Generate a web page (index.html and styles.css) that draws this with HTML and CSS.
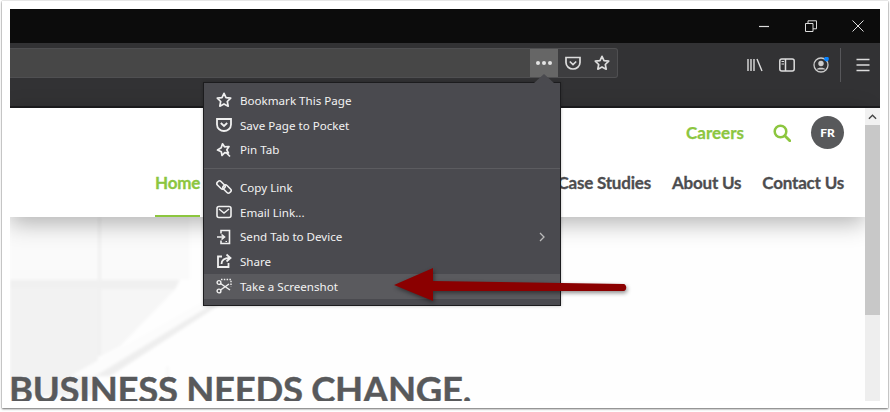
FILE: index.html
```html
<!DOCTYPE html>
<html lang="en">
<head>
<meta charset="utf-8">
<title>Take a Screenshot</title>
<link rel="stylesheet" href="styles.css">
</head>
<body>
<div class="frame">
  <div class="window">
    <div class="titlebar">
      <svg class="ctl" viewBox="0 0 12 12"><path d="M1 6.500h10" stroke="#ddd" stroke-width="1.200"/></svg>
      <svg class="ctl" viewBox="0 0 12 12"><path d="M.5 3.500h7.500v8H.5zM3 3.500V.8h8.500v8H8" fill="none" stroke="#ddd"/></svg>
      <svg class="ctl" viewBox="0 0 12 12"><path d="M.5.500l11 11M11.500.500l-11 11" stroke="#ddd"/></svg>
    </div>
    <div class="toolbar">
      <div class="urlbar">
        <div class="url-fill"></div>
        <div class="dots"><span></span><span></span><span></span></div>
        <svg class="tool" viewBox="0 0 16 16"><path d="M1 2.500h14v5c0 4-3.500 6.500-7 6.500S1 11.500 1 7.500z" fill="none" stroke="#ddd" stroke-width="1.700"/><path d="M4.800 6.500L8 9.500l3.200-3" fill="none" stroke="#ddd" stroke-width="1.700"/></svg>
        <svg class="tool star" viewBox="0 0 16 16"><path d="M8 1.300l2 4.300 4.700.6-3.400 3.300.9 4.700L8 11.900l-4.200 2.300.9-4.700L1.300 6.200 6 5.600z" fill="none" stroke="#ddd" stroke-width="1.700" stroke-linejoin="round"/></svg>
      </div>
      <div class="tools">
        <svg class="tool" viewBox="0 0 16 16"><path d="M1 2v12M4 2v12M7 2v12M10 2l5 12" stroke="#ddd" stroke-width="1.400" fill="none"/></svg>
        <svg class="tool" viewBox="0 0 16 16"><rect x=".8" y="2" width="14.400" height="12" rx="2" fill="none" stroke="#ddd" stroke-width="1.500"/><path d="M6.500 2v12" stroke="#ddd" stroke-width="1.500"/><path d="M2.500 4.500h2.500M2.500 7h2.500" stroke="#ddd"/></svg>
        <svg class="tool account" viewBox="0 0 16 16"><circle cx="8" cy="8" r="7" fill="none" stroke="#ccc" stroke-width="1.300"/><circle cx="8" cy="6.500" r="2.700" fill="#ccc"/><path d="M3.500 12.500c1-2.500 8-2.500 9 0" fill="#ccc"/><circle cx="13.500" cy="2" r="2.400" fill="#0a84ff"/></svg>
        <div class="vsep"></div>
        <svg class="tool burger" viewBox="0 0 14 14"><path d="M.500 1.500h13M.500 7h13M.500 12.500h13" stroke="#ddd" stroke-width="1.600"/></svg>
      </div>
    </div>
    <div class="viewport">
      <div class="page">
        <header class="header">
          <div class="utility">
            <span class="careers">Careers</span>
            <svg class="search" viewBox="0 0 18 18"><circle cx="7.500" cy="7.500" r="5.800" fill="none" stroke="#8cc63f" stroke-width="2.500"/><path d="M11.800 11.800l5 5" stroke="#8cc63f" stroke-width="2.800" stroke-linecap="round"/></svg>
            <span class="avatar">FR</span>
          </div>
          <nav class="nav">
            <span class="nav-item active">Home</span>
            <span class="nav-fill"></span>
            <span class="nav-item">Case Studies</span>
            <span class="nav-item">About Us</span>
            <span class="nav-item">Contact Us</span>
          </nav>
        </header>
        <section class="hero">
          <svg class="hero-art" viewBox="0 0 855 185" preserveAspectRatio="none">
            <rect width="855" height="185" fill="#fefefe"/>
            <rect x="-10" y="-10" width="190" height="73" fill="#fafafa"/>
            <path d="M-10 63H170L165 73H-10z" fill="#f0f0f0"/>
            <rect x="-10" y="73" width="98" height="107" fill="#f2f2f2"/>
            <path d="M91 73H165L110 130 91 140z" fill="#f6f6f6"/>
            <rect x="88" y="-10" width="3" height="150" fill="#f0f0f0"/>
            <path d="M60 160L190 86H205L85 160z" fill="#fcfcfc"/>
            <path d="M85 160L205 86H213L100 160z" fill="#eeeeee"/>
            <rect x="157" y="150" width="1" height="35" fill="#efefef"/>
          </svg>
          <h1 class="headline">BUSINESS NEEDS CHANGE.</h1>
        </section>
      </div>
      <div class="scrollbar">
        <div class="sb-arrow"><svg viewBox="0 0 10 6" width="9" height="6"><path d="M1 5l4-4 4 4" fill="none" stroke="#444" stroke-width="1.500"/></svg></div>
        <div class="sb-thumb"></div>
      </div>
    </div>
  </div>
  <div class="menu">
    <svg class="notch" viewBox="0 0 20 9"><path d="M0 9L10 0l10 9z" fill="#4a4a4f"/></svg>
    <div class="menu-item">
      <svg class="mi" viewBox="0 0 16 16"><path d="M8 1.300l2 4.300 4.700.6-3.400 3.300.9 4.700L8 11.900l-4.200 2.300.9-4.700L1.300 6.200 6 5.600z" fill="none" stroke="#f0f0f0" stroke-width="1.700" stroke-linejoin="round"/></svg>
      <span>Bookmark This Page</span>
    </div>
    <div class="menu-item">
      <svg class="mi" viewBox="0 0 16 16"><path d="M1 2h14v5.500c0 4-3.500 6.500-7 6.500s-7-2.500-7-6.500z" fill="none" stroke="#f0f0f0" stroke-width="1.800"/><path d="M4.800 6L8 9l3.200-3" fill="none" stroke="#f0f0f0" stroke-width="1.800"/></svg>
      <span>Save Page to Pocket</span>
    </div>
    <div class="menu-item">
      <svg class="mi" viewBox="0 0 16 16"><path d="M6.500 1.800l2 3 4.500-.3-2.200 3.300 1.600 3.200-3.700-.3L6 13.500 5.300 9.700 1.500 8l3.700-2.200zM10 10.500l4 4" fill="none" stroke="#f0f0f0" stroke-width="1.700" stroke-linejoin="round"/></svg>
      <span>Pin Tab</span>
    </div>
    <div class="menu-sep"></div>
    <div class="menu-item">
      <svg class="mi" viewBox="0 0 16 16"><rect x=".5" y="3.500" width="9" height="5" rx="2" transform="rotate(45 5 6)" fill="none" stroke="#f0f0f0" stroke-width="1.600"/><rect x="6.500" y="7.500" width="9" height="5" rx="2" transform="rotate(45 11 10)" fill="none" stroke="#f0f0f0" stroke-width="1.600"/></svg>
      <span>Copy Link</span>
    </div>
    <div class="menu-item">
      <svg class="mi" viewBox="0 0 16 16"><rect x="1" y="2.500" width="14" height="11" rx="2" fill="none" stroke="#f0f0f0" stroke-width="1.600"/><path d="M3 5l5 4 5-4" fill="none" stroke="#f0f0f0" stroke-width="1.500"/></svg>
      <span>Email Link...</span>
    </div>
    <div class="menu-item">
      <svg class="mi" viewBox="0 0 16 16"><path d="M5 4.500V1.500h8.500v13H5v-3" fill="none" stroke="#f0f0f0" stroke-width="1.600"/><path d="M1 8h7M5.500 5.500L8.500 8l-3 2.500" fill="none" stroke="#f0f0f0" stroke-width="1.600"/><path d="M9.500 12.500h1.500" stroke="#f0f0f0"/></svg>
      <span>Send Tab to Device</span>
      <svg class="chev" viewBox="0 0 6 10"><path d="M1 1l4 4-4 4" fill="none" stroke="#bbb" stroke-width="1.300"/></svg>
    </div>
    <div class="menu-item">
      <svg class="mi" viewBox="0 0 16 16"><path d="M6 3.500H2v10.500h10.500v-4" fill="none" stroke="#f0f0f0" stroke-width="1.800"/><path d="M5.500 11c0-4 3-6 8-6M10.500 1.500L14.500 5l-4 3.500" fill="none" stroke="#f0f0f0" stroke-width="1.800"/></svg>
      <span>Share</span>
    </div>
    <div class="menu-item hover">
      <svg class="mi" viewBox="0 0 16 16"><path d="M5 1.500h10v7" fill="none" stroke="#f0f0f0" stroke-width="1.400" stroke-dasharray="1.500 1.300"/><circle cx="3" cy="4.500" r="1.900" fill="none" stroke="#f0f0f0" stroke-width="1.400"/><circle cx="3" cy="13" r="1.900" fill="none" stroke="#f0f0f0" stroke-width="1.400"/><path d="M4.500 5.500L14 12M4.500 12L13 6" stroke="#f0f0f0" stroke-width="1.500"/></svg>
      <span>Take a Screenshot</span>
    </div>
  </div>
  <svg class="arrow" viewBox="0 0 240 40">
    <path d="M3 17L42 0L42 13L233 16C236 17 236 22 233 23L42 23L42 33z" fill="#8b0000"/>
  </svg>
</div>
</body>
</html>
```
FILE: styles.css
```css
* { box-sizing: border-box; }
html, body { margin: 0; height: 100%; background: #fff; overflow: hidden; }
body { padding: 1px 2px 4px 2px; font-family: "Lato", "Liberation Sans", sans-serif; }
.frame {
  position: relative;
  height: 407px;
  width: 886px;
  padding: 8px 8px 7px 8px;
  background: #fff;
  box-shadow: 0 1px 2px rgba(0,0,0,.55), 0 0 1px rgba(0,0,0,.35);
}
.window { display: flex; flex-direction: column; height: 100%; overflow: hidden; }
.titlebar {
  height: 34px;
  background: #0c0c0c;
  display: flex;
  align-items: center;
  justify-content: flex-end;
  gap: 35px;
  padding-right: 16px;
}
.ctl { width: 12px; height: 12px; }
.toolbar {
  height: 63px;
  background: #323234;
  display: flex;
  align-items: flex-start;
  padding-top: 5px;
}
.urlbar {
  width: 608px;
  height: 30px;
  display: flex;
  align-items: center;
  background: #3d3d3f;
  border: 1px solid #4f4f51;
  border-left: 0;
  border-radius: 0 3px 3px 0;
}
.url-fill { flex: 1; height: 100%; background: #474747; }
.dots {
  width: 28px;
  height: 100%;
  background: #666;
  display: flex;
  align-items: center;
  justify-content: center;
  gap: 2px;
}
.dots span { width: 4px; height: 4px; border-radius: 50%; background: #e4e4e4; }
.tool { width: 16px; height: 16px; flex: none; }
.urlbar .tool { margin-left: 7px; }
.urlbar .star { margin-left: 13px; margin-right: 7px; }
.tools { flex: 1; display: flex; align-items: center; height: 34px; padding-left: 129px; }
.tools .tool { margin-right: 16px; }
.tools .account { margin-right: 11px; margin-left: 2px; }
.vsep { width: 1px; height: 34px; background: #57575a; }
.tools .burger { width: 14px; height: 14px; margin: 0 0 0 15px; }
.viewport {
  flex: 1;
  min-height: 0;
  display: flex;
  border-top: 2px solid #1d1d1f;
}
.page { flex: 1; min-width: 0; display: flex; flex-direction: column; }
.header {
  height: 109px;
  background: #fff;
  box-shadow: 0 6px 22px rgba(0,0,0,.3);
  position: relative;
  z-index: 1;
  display: flex;
  flex-direction: column;
}
.utility {
  display: flex;
  align-items: center;
  justify-content: flex-end;
  padding: 8px 21px 0 0;
  height: 41px;
}
.careers { font-size: 17px; font-weight: 700; color: #8cc63f; -webkit-text-stroke: .25px #8cc63f; }
.search { width: 18px; height: 18px; margin-left: 29px; }
.avatar {
  width: 33px;
  height: 33px;
  margin-left: 20px;
  border-radius: 50%;
  background: #58595b;
  color: #fff;
  font-size: 12px;
  font-weight: 900;
  display: flex;
  align-items: center;
  justify-content: center;
}
.nav {
  flex: 1;
  display: flex;
  align-items: stretch;
  gap: 21px;
  padding: 0 21px 0 145px;
}
.nav-item {
  font-size: 17px;
  font-weight: 700;
  color: #4d4d4f;
  padding-top: 23px;
  line-height: 22px;
  letter-spacing: -.2px;
  -webkit-text-stroke: .3px #4d4d4f;
}
.nav-item.active { color: #8cc63f; border-bottom: 2px solid #8cc63f; -webkit-text-stroke: .3px #8cc63f; }
.nav-fill { flex: 1; }
.hero {
  position: relative;
  flex: 1;
  min-height: 0;
  overflow: hidden;
  display: flex;
  align-items: flex-end;
}
.hero-art { position: absolute; inset: 0; width: 100%; height: 100%; filter: blur(1.500px); }
.headline {
  position: relative;
  margin: 0 0 -10px -1px;
  font-size: 36.500px;
  line-height: 44px;
  font-weight: 700;
  color: #58595b;
  white-space: nowrap;
  letter-spacing: -.3px;
  -webkit-text-stroke: .4px #58595b;
}
.scrollbar { position: relative; z-index: 2; width: 15px; background: #eee; display: flex; flex-direction: column; }
.sb-arrow { height: 17px; background: #f1f1f1; display: flex; align-items: center; justify-content: center; }
.sb-thumb { height: 190px; background: #c8c8c8; }
.menu {
  position: absolute;
  z-index: 3;
  left: 201px;
  top: 81px;
  width: 358px;
  height: 224px;
  background: #4a4a4f;
  border: 1px solid #1c1c1e;
  box-shadow: 0 0 3px rgba(0,0,0,.25);
  padding: 5px 0 0 0;
  font-family: "Noto Sans", "Open Sans", sans-serif;
  font-size: 11.600px;
  color: #f2f2f2;
}
.notch { position: absolute; right: 6px; top: -9px; width: 20px; height: 9px; }
.menu-item { height: 24.700px; display: flex; align-items: center; padding: 0 11px 0 12px; gap: 8px; }
.menu-item span { flex: 1; }
.menu-item.hover { background: #5a5a5e; }
.mi { width: 16px; height: 16px; flex: none; }
.chev { width: 6px; height: 10px; flex: none; margin-right: 4px; }
.menu-sep { height: 1px; margin: 6px 0; background: #5c5c60; }
.arrow {
  position: absolute;
  z-index: 4;
  left: 389px;
  top: 267px;
  width: 240px;
  height: 40px;
  filter: drop-shadow(1px 2px 2px rgba(0,0,0,.45));
}
```
